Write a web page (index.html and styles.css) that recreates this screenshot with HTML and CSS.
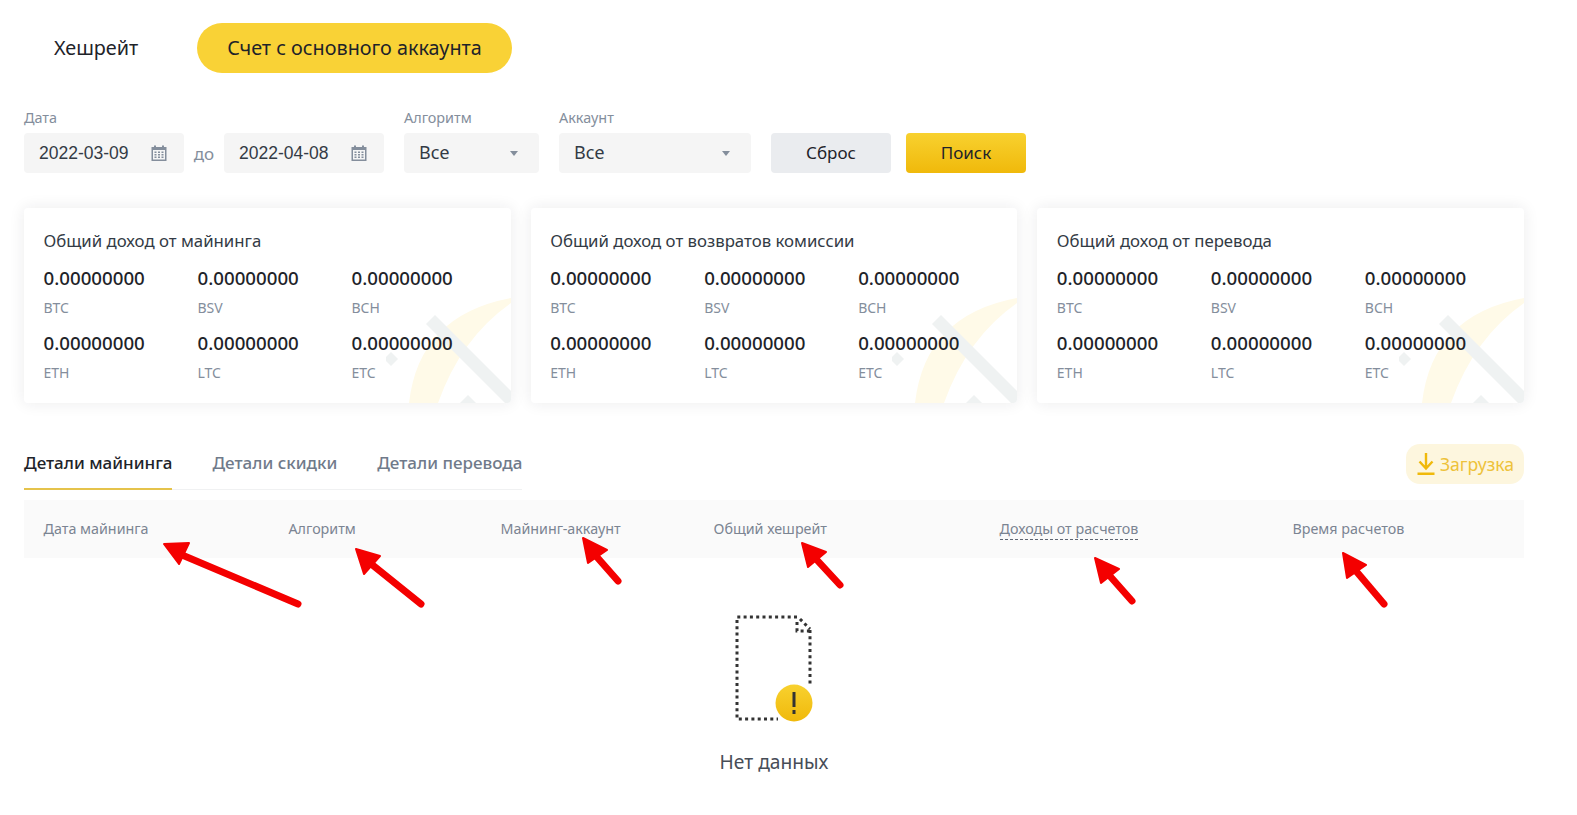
FILE: index.html
```html
<!DOCTYPE html>
<html>

<head>
    <meta charset="utf-8">
    <link rel="stylesheet" href="styles.css">
</head>

<body>
    <div class="page">
        <div class="top-tabs">
            <div class="top-tab">Хешрейт</div>
            <div class="top-tab active">Счет с основного аккаунта</div>
        </div>

        <div class="filters">
            <div class="field">
                <label>Дата</label>
                <div class="date-range">
                    <div class="input date">
                        <span>2022-03-09</span>
                        <svg class="calendar" viewBox="0 0 16 16"><use href="#cal"></use></svg>
                    </div>
                    <span class="to">до</span>
                    <div class="input date">
                        <span>2022-04-08</span>
                        <svg class="calendar" viewBox="0 0 16 16"><use href="#cal"></use></svg>
                    </div>
                </div>
            </div>
            <div class="field">
                <label>Алгоритм</label>
                <div class="input select algo"><span>Все</span><i class="caret"></i></div>
            </div>
            <div class="field">
                <label>Аккаунт</label>
                <div class="input select account"><span>Все</span><i class="caret"></i></div>
            </div>
            <div class="buttons">
                <button class="btn reset">Сброс</button>
                <button class="btn search">Поиск</button>
            </div>
        </div>

        <div class="cards">
            <div class="card">
                <svg class="pick" viewBox="0 0 125 110"><use href="#pickaxe"></use></svg>
                <div class="card-title">Общий доход от майнинга</div>
                <div class="coins">
                    <div><b>0.00000000</b><span>BTC</span></div>
                    <div><b>0.00000000</b><span>BSV</span></div>
                    <div><b>0.00000000</b><span>BCH</span></div>
                    <div><b>0.00000000</b><span>ETH</span></div>
                    <div><b>0.00000000</b><span>LTC</span></div>
                    <div><b>0.00000000</b><span>ETC</span></div>
                </div>
            </div>
            <div class="card">
                <svg class="pick" viewBox="0 0 125 110"><use href="#pickaxe"></use></svg>
                <div class="card-title">Общий доход от возвратов комиссии</div>
                <div class="coins">
                    <div><b>0.00000000</b><span>BTC</span></div>
                    <div><b>0.00000000</b><span>BSV</span></div>
                    <div><b>0.00000000</b><span>BCH</span></div>
                    <div><b>0.00000000</b><span>ETH</span></div>
                    <div><b>0.00000000</b><span>LTC</span></div>
                    <div><b>0.00000000</b><span>ETC</span></div>
                </div>
            </div>
            <div class="card">
                <svg class="pick" viewBox="0 0 125 110"><use href="#pickaxe"></use></svg>
                <div class="card-title">Общий доход от перевода</div>
                <div class="coins">
                    <div><b>0.00000000</b><span>BTC</span></div>
                    <div><b>0.00000000</b><span>BSV</span></div>
                    <div><b>0.00000000</b><span>BCH</span></div>
                    <div><b>0.00000000</b><span>ETH</span></div>
                    <div><b>0.00000000</b><span>LTC</span></div>
                    <div><b>0.00000000</b><span>ETC</span></div>
                </div>
            </div>
        </div>

        <div class="detail-bar">
            <div class="detail-tabs">
                <div class="detail-tab active">Детали майнинга</div>
                <div class="detail-tab">Детали скидки</div>
                <div class="detail-tab">Детали перевода</div>
            </div>
            <button class="download">
                <svg viewBox="0 0 20 26" width="20" height="26">
                    <path d="M10 2V17M3.500 10.500L10 17.500L16.500 10.500" fill="none" stroke="#f0b90b" stroke-width="2.400"></path>
                    <rect x="1.500" y="21.500" width="17" height="2.500" fill="#f0b90b"></rect>
                </svg>
                Загрузка
            </button>
        </div>

        <div class="table-head">
            <div>Дата майнинга</div>
            <div>Алгоритм</div>
            <div>Майнинг-аккаунт</div>
            <div>Общий хешрейт</div>
            <div><span class="dashed">Доходы от расчетов</span></div>
            <div>Время расчетов</div>
        </div>

        <div class="empty">
            <svg class="empty-icon" viewBox="0 0 90 115" width="90" height="115">
                <defs>
                    <linearGradient id="gold" x1="0" y1="0" x2="0" y2="1">
                        <stop offset="0" stop-color="#f8d12f"></stop>
                        <stop offset="1" stop-color="#f0b90b"></stop>
                    </linearGradient>
                </defs>
                <g fill="none" stroke="#333" stroke-width="3" stroke-dasharray="3 3.300">
                    <path d="M67 7H7V109H48"></path>
                    <path d="M80 20V76"></path>
                    <path d="M67 12V21H80"></path>
                    <path d="M70 9L80 19"></path>
                </g>
                <circle cx="64" cy="93" r="18.500" fill="url(#gold)"></circle>
                <rect x="62.500" y="82" width="3" height="15" fill="#333"></rect>
                <rect x="62.500" y="100" width="3" height="4" fill="#333"></rect>
            </svg>
            <div class="empty-text">Нет данных</div>
        </div>
    </div>

    <!-- red arrows drawn over the screenshot -->
    <svg class="arrows" viewBox="0 0 1577 815" width="1577" height="815">
        <g fill="#f40000" stroke="#f40000" stroke-linecap="round" stroke-linejoin="round">
            <path d="M175 552L298 604" fill="none" stroke-width="7"></path>
            <path d="M164 544L189 543L179 564Z" stroke-width="2"></path>
            <path d="M370 563L421 604" fill="none" stroke-width="7"></path>
            <path d="M356 549L380 556L364 574Z" stroke-width="2"></path>
            <path d="M596 556L618 581" fill="none" stroke-width="7"></path>
            <path d="M583 538L607 550L588 563Z" stroke-width="2"></path>
            <path d="M816 559L840 585" fill="none" stroke-width="7"></path>
            <path d="M802 543L826 552L808 567Z" stroke-width="2"></path>
            <path d="M1109 575L1132 601" fill="none" stroke-width="7"></path>
            <path d="M1095 558L1119 569L1101 583Z" stroke-width="2"></path>
            <path d="M1356 571L1384 604" fill="none" stroke-width="7"></path>
            <path d="M1343 553L1366 565L1347 578Z" stroke-width="2"></path>
        </g>
    </svg>

    <svg class="defs" width="0" height="0">
        <defs>
            <symbol id="cal" viewBox="0 0 16 16">
                <path fill="#848e9c" fill-rule="evenodd" d="M3 0.500H5V2H11V0.500H13V2H15.500V16H0.500V2H3ZM2 5V14.500H14V5ZM3.500 6.500H5.500V8H3.500ZM7 6.500H9V8H7ZM10.500 6.500H12.500V8H10.500ZM3.500 9H5.500V10.500H3.500ZM7 9H9V10.500H7ZM10.500 9H12.500V10.500H10.500ZM3.500 11.500H5.500V13H3.500ZM7 11.500H9V13H7ZM10.500 11.500H12.500V13H10.500Z"></path>
            </symbol>
            <symbol id="pickaxe" viewBox="0 0 125 110">
                <path fill="#fffae8" d="M23 110Q33 22 125 5V10Q75 45 52 110Z"></path>
                <path fill="#eff2f2" d="M40 31L49 22L125 98V110H119Z"></path>
                <path fill="#eff2f2" d="M5 59L12 66L5 73L-2 66Z"></path>
                <path fill="#eff2f2" d="M82 102L90 110H74Z"></path>
            </symbol>
        </defs>
    </svg>
</body>

</html>
```

FILE: styles.css
```css
* {
    box-sizing: border-box;
}

html,
body {
    height: 100%;
}

body {
    margin: 0;
    background: #fff;
    color: #1e2329;
    font-family: "Noto Sans", "Liberation Sans", sans-serif;
    overflow: hidden;
    position: relative;
}

.page {
    width: 1500px;
    margin-left: 24px;
    padding-top: 23px;
}

.top-tabs {
    display: flex;
    gap: 29px;
}

.top-tab {
    height: 50px;
    line-height: 50px;
    padding: 0 30px;
    border-radius: 25px;
    font-size: 19.800px;
}

.top-tab.active {
    background: #f9d236;
}

.filters {
    display: flex;
    align-items: flex-end;
    gap: 20px;
    margin-top: 35px;
}

.field label {
    display: block;
    color: #848e9c;
    font-size: 14.400px;
    line-height: 20px;
    margin-bottom: 5px;
}

.date-range {
    display: flex;
    align-items: center;
}

.input {
    height: 40px;
    background: #f5f5f5;
    border-radius: 4px;
    display: flex;
    align-items: center;
    justify-content: space-between;
    padding: 0 17px 0 15px;
    color: #333b45;
}

.input span {
    font-size: 18px;
    padding-bottom: 2px;
}

.date {
    width: 160px;
    font-family: "Liberation Sans", sans-serif;
}

.date span {
    font-size: 17.500px;
    padding-bottom: 0;
}

.to {
    width: 40px;
    text-align: center;
    color: #848e9c;
    font-size: 17px;
}

.calendar {
    width: 16px;
    height: 16px;
}

.algo {
    width: 135px;
}

.account {
    width: 192px;
}

.select {
    padding-right: 21px;
}

.caret {
    width: 0;
    height: 0;
    border-left: 4px solid transparent;
    border-right: 4px solid transparent;
    border-top: 5px solid #848e9c;
}

.buttons {
    display: flex;
    gap: 15px;
}

.btn {
    width: 120px;
    height: 40px;
    padding: 0 0 2px;
    border: none;
    border-radius: 4px;
    font-family: inherit;
    font-size: 17px;
    color: #1e2329;
}

.reset {
    background: #eaecef;
}

.search {
    background: linear-gradient(180deg, #f8d12f 0%, #f0b90b 100%);
}

.cards {
    display: grid;
    grid-template-columns: repeat(3, 1fr);
    gap: 20px;
    margin-top: 35px;
}

.card {
    position: relative;
    height: 195px;
    padding: 21px 19.500px 0;
    background: #fff;
    border-radius: 4px;
    box-shadow: 0 0 16px rgba(30, 35, 41, 0.09);
    overflow: hidden;
}

.pick {
    position: absolute;
    right: 0;
    bottom: 0;
    width: 125px;
    height: 110px;
}

.card-title {
    position: relative;
    font-size: 16.800px;
    line-height: 24px;
    color: #333b45;
}

.coins {
    position: relative;
    display: grid;
    grid-template-columns: repeat(3, 154px);
    margin-top: 10px;
}

.coins div {
    height: 65px;
}

.coins b {
    display: block;
    font-size: 18.700px;
    font-weight: 500;
    line-height: 30px;
}

.coins span {
    display: block;
    margin-top: 5px;
    color: #848e9c;
    font-size: 14px;
    line-height: 20px;
}

.detail-bar {
    display: flex;
    justify-content: space-between;
    margin-top: 41px;
}

.detail-tabs {
    display: flex;
    gap: 40px;
    height: 46px;
    border-bottom: 1px solid #f0f1f2;
}

.detail-tab {
    height: 46px;
    line-height: 37px;
    font-size: 17px;
    font-weight: 500;
    color: #707a8a;
}

.detail-tab.active {
    color: #1e2329;
    border-bottom: 2px solid #e5c34b;
}

.download {
    display: flex;
    align-items: center;
    gap: 4px;
    height: 40px;
    padding: 0 10px;
    border: none;
    border-radius: 14px;
    background: #fdf6de;
    color: #eec23a;
    font-family: inherit;
    font-size: 17.600px;
}

.table-head {
    display: grid;
    grid-template-columns: 245px 212px 213px 286px 293px 1fr;
    align-items: center;
    height: 58px;
    margin-top: 10px;
    padding: 0 0 2px 19.500px;
    background: #fafafa;
    color: #7b8492;
    font-size: 14.300px;
}

.dashed {
    border-bottom: 1px dashed #5e6673;
    padding-bottom: 1px;
}

.empty {
    display: flex;
    flex-direction: column;
    align-items: center;
    margin-top: 52px;
}

.empty-icon {
    display: block;
    margin-left: 2px;
}

.empty-text {
    margin-top: 23px;
    font-size: 19.200px;
    line-height: 28px;
    color: #474d57;
}

.arrows {
    position: absolute;
    left: 0;
    top: 0;
    pointer-events: none;
}

.defs {
    position: absolute;
}
```
